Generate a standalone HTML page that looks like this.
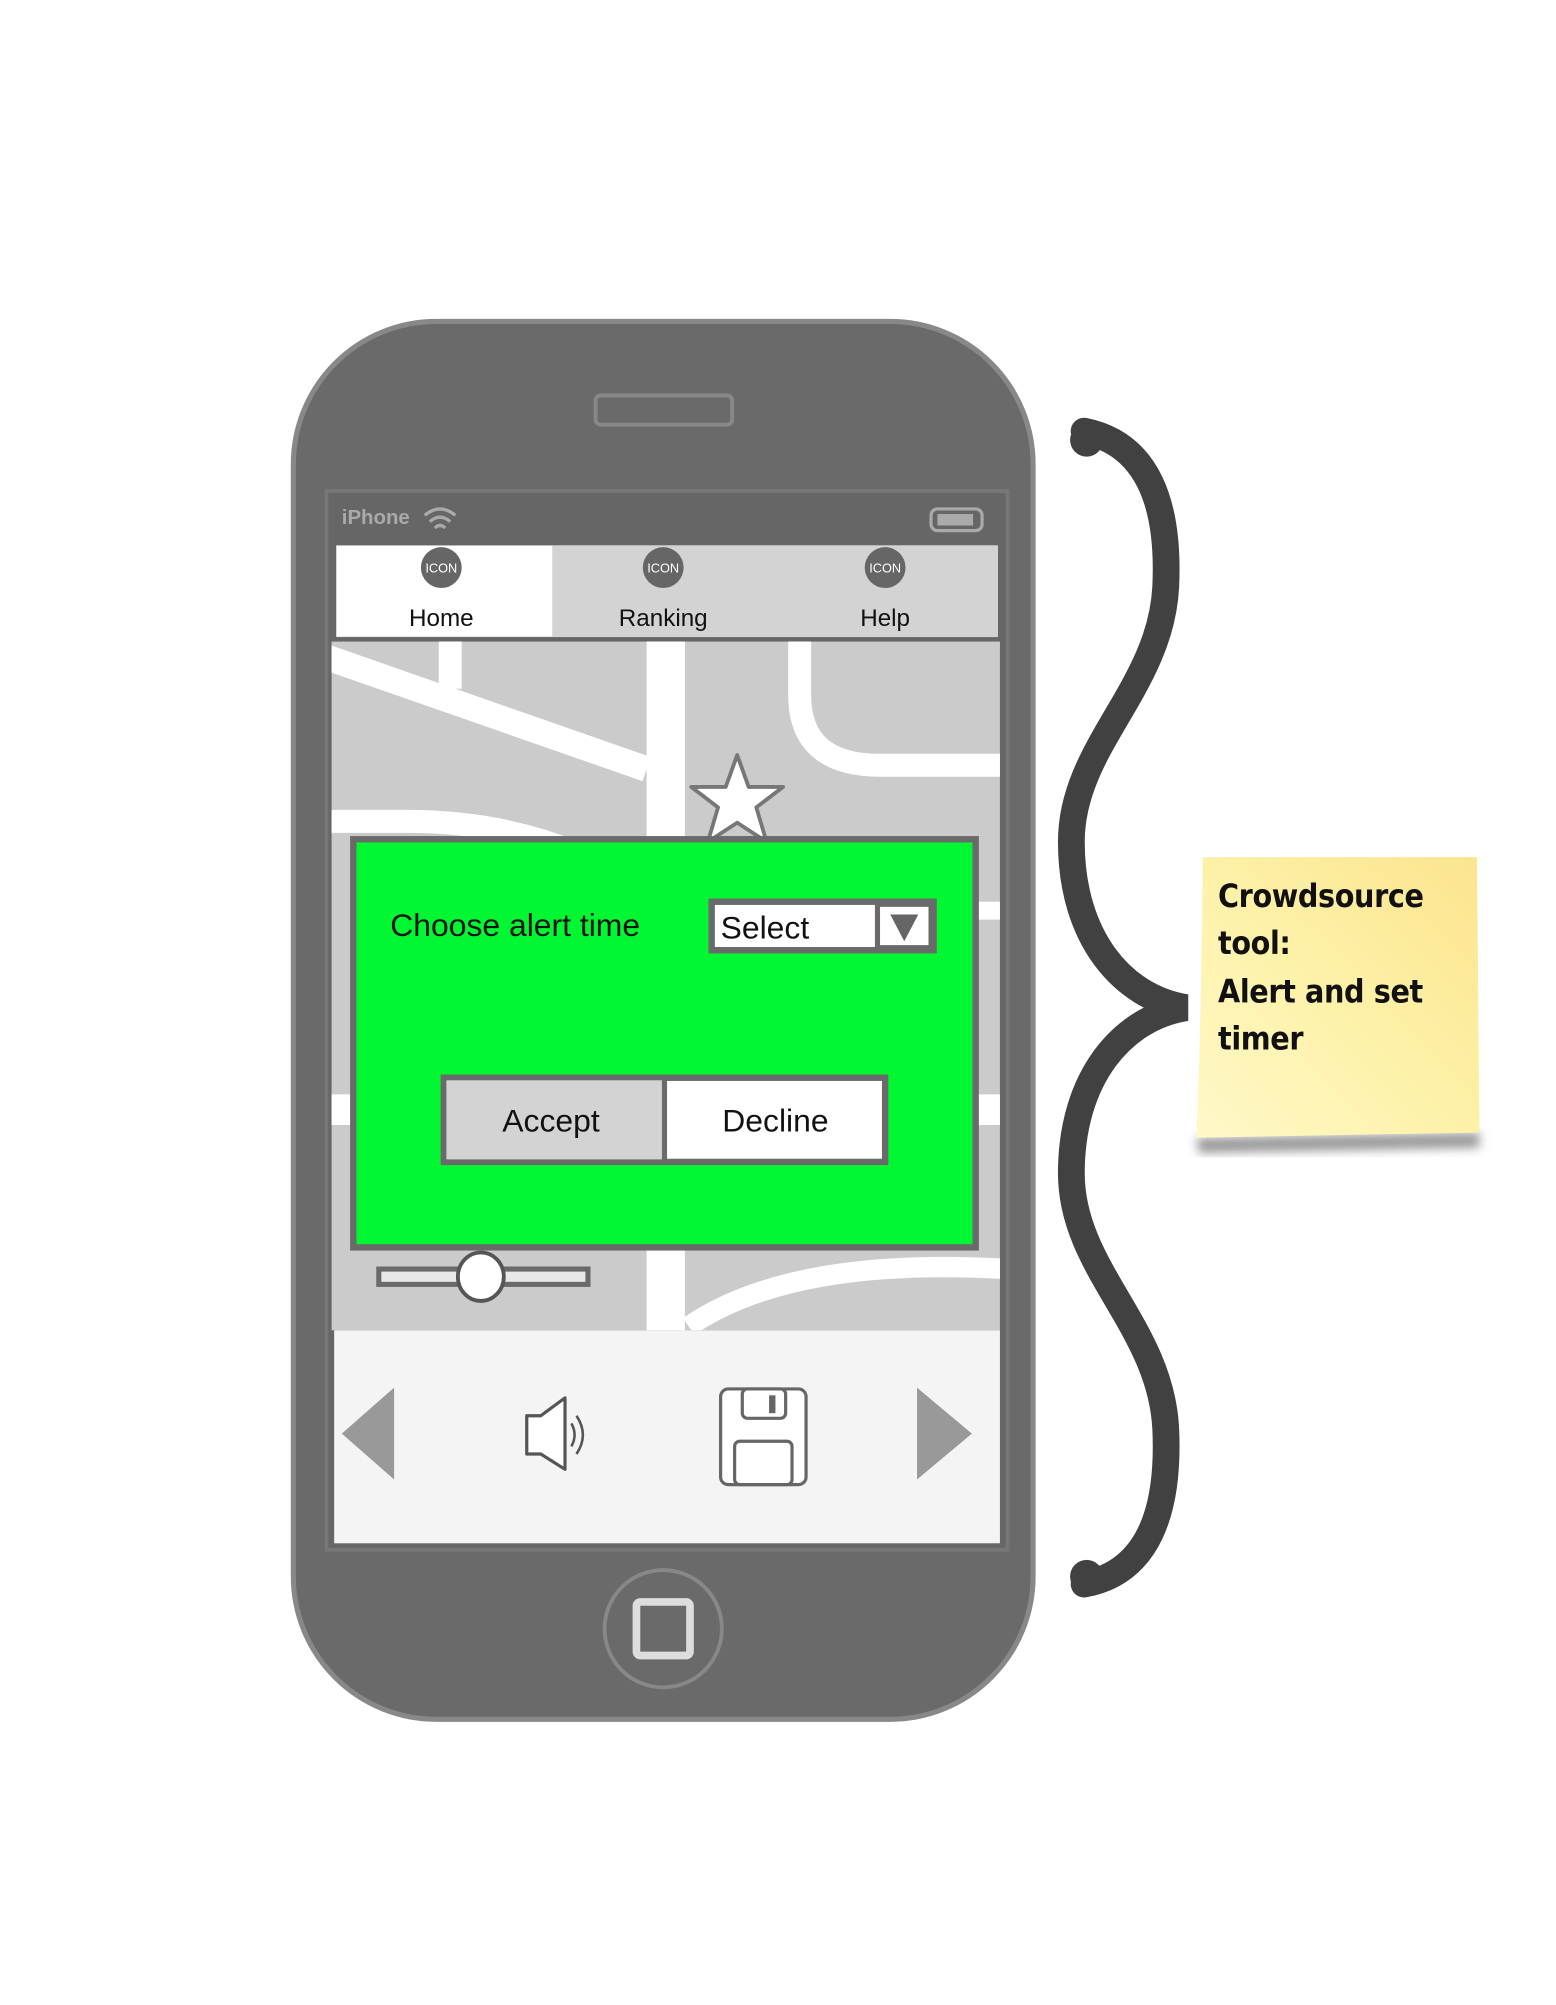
<!DOCTYPE html>
<html><head><meta charset="utf-8"><style>
html,body{margin:0;padding:0;background:#fff;width:1556px;height:2005px;overflow:hidden}
svg{display:block}
</style></head><body>
<svg width="1556" height="2005" viewBox="0 0 1220 1572" xmlns="http://www.w3.org/2000/svg" font-family="'Liberation Sans', Arial, sans-serif">
<defs>
<linearGradient id="note" x1="0" y1="1" x2="1" y2="0">
<stop offset="0" stop-color="#fff8c8"/><stop offset="0.5" stop-color="#fdf1a8"/><stop offset="1" stop-color="#fbe48e"/>
</linearGradient>
<filter id="sh" x="-20%" y="-20%" width="140%" height="140%"><feGaussianBlur stdDeviation="4"/></filter>
<clipPath id="mapclip"><rect x="260" y="503" width="524" height="540"/></clipPath>
</defs>
<rect x="230" y="252" width="580" height="1096" rx="112" fill="#6a6a6a" stroke="#888" stroke-width="4"/>
<rect x="467" y="310" width="107" height="23" rx="4" fill="none" stroke="#888" stroke-width="3"/>
<rect x="256" y="385" width="534" height="830" fill="#666" stroke="#777" stroke-width="3"/>
<text x="268" y="411" font-size="16" font-weight="bold" fill="#aaa">iPhone</text>
<g fill="none" stroke="#aaa" stroke-width="2.5">
<path d="M333 404 Q345 394 357 404"/><path d="M337 409 Q345 402 353 409"/><path d="M341 414 Q345 410 349 414"/>
</g>
<rect x="730" y="399" width="40" height="17" rx="5" fill="none" stroke="#aaa" stroke-width="2.5"/>
<rect x="735" y="403" width="28" height="9" fill="#aaa"/>
<rect x="262" y="426" width="522" height="75" fill="#d3d3d3" stroke="#666" stroke-width="3"/>
<rect x="264" y="428" width="169" height="71" fill="#fff"/>
<g font-size="10" fill="#fff" text-anchor="middle">
<circle cx="346" cy="445" r="16" fill="#666"/><text x="346" y="449">ICON</text>
<circle cx="520" cy="445" r="16" fill="#666"/><text x="520" y="449">ICON</text>
<circle cx="694" cy="445" r="16" fill="#666"/><text x="694" y="449">ICON</text>
</g>
<g font-size="19" fill="#111" text-anchor="middle">
<text x="346" y="491">Home</text><text x="520" y="491">Ranking</text><text x="694" y="491">Help</text>
</g>
<rect x="260" y="503" width="524" height="540" fill="#cbcbcb"/>
<g clip-path="url(#mapclip)" fill="none" stroke="#fff">
<path d="M255 515 L507 603" stroke-width="20"/>
<path d="M353 500 L353 540" stroke-width="18"/>
<path d="M522 500 L522 1050" stroke-width="30"/>
<path d="M627 500 L627 545 Q627 600 690 600 L790 600" stroke-width="18"/>
<path d="M255 644 L320 644 Q390 644 450 668" stroke-width="18"/>
<path d="M760 714 L790 714" stroke-width="14"/>
<path d="M760 870 L790 870" stroke-width="24"/>
<path d="M255 870 L280 870" stroke-width="24"/>
<path d="M540 1040 Q620 985 790 995" stroke-width="16"/>
</g>
<path d="M578 592 L587 617 L614 617 L593 633 L601 660 L578 645 L555 660 L563 633 L542 617 L569 617 Z" fill="#fff" stroke="#777" stroke-width="3" stroke-linejoin="round"/>
<rect x="277" y="658" width="488" height="320" fill="#00f731" stroke="#6a6a6a" stroke-width="5"/>
<text x="306" y="734" font-size="25" fill="#111">Choose alert time</text>
<rect x="558" y="707" width="174" height="38" fill="#fff" stroke="#6a6a6a" stroke-width="5"/>
<rect x="688" y="709" width="42" height="34" fill="#fff" stroke="#6a6a6a" stroke-width="4"/>
<path d="M698 717 L720 717 L709 738 Z" fill="#666"/>
<text x="565" y="736" font-size="25" fill="#111">Select</text>
<rect x="348" y="845" width="346" height="66" fill="#fff" stroke="#6a6a6a" stroke-width="5"/>
<rect x="350" y="847" width="171" height="62" fill="#d3d3d3"/>
<line x1="521" y1="845" x2="521" y2="911" stroke="#6a6a6a" stroke-width="4"/>
<text x="432" y="887" font-size="25" fill="#111" text-anchor="middle">Accept</text>
<text x="608" y="887" font-size="25" fill="#111" text-anchor="middle">Decline</text>
<rect x="297" y="995" width="164" height="12" fill="#e8e8e8" stroke="#6a6a6a" stroke-width="4"/>
<ellipse cx="377" cy="1001" rx="18" ry="19" fill="#fff" stroke="#555" stroke-width="3"/>
<rect x="262" y="1043" width="522" height="167" fill="#f4f4f4"/>
<path d="M309 1088 L309 1160 L268 1124 Z" fill="#999"/>
<path d="M719 1088 L719 1160 L762 1124 Z" fill="#999"/>
<path d="M413 1110 L424 1110 L443 1096 L443 1152 L424 1140 L413 1140 Z" fill="#fff" stroke="#555" stroke-width="2.5" stroke-linejoin="round"/>
<path d="M448 1116 Q453 1125 448 1134" fill="none" stroke="#555" stroke-width="2"/>
<path d="M452 1110 Q462 1125 452 1140" fill="none" stroke="#555" stroke-width="2"/>
<rect x="565" y="1089" width="67" height="75" rx="6" fill="#fff" stroke="#666" stroke-width="2.5"/>
<rect x="582" y="1089" width="34" height="23" rx="4" fill="#fff" stroke="#666" stroke-width="2.5"/>
<rect x="603" y="1094" width="5" height="14" fill="#666"/>
<rect x="576" y="1130" width="45" height="34" rx="4" fill="#fff" stroke="#666" stroke-width="2.5"/>
<circle cx="520" cy="1277" r="46" fill="none" stroke="#888" stroke-width="3"/>
<rect x="499" y="1256" width="42" height="42" rx="3" fill="none" stroke="#ddd" stroke-width="6"/>
<path d="M850 338 C900 348 917 395 914 460 C910 540 840 585 840 660 C840 735 880 782 930 790 C880 798 840 845 840 920 C840 995 910 1040 914 1120 C917 1185 900 1233 850 1242"
 fill="none" stroke="#414141" stroke-width="21" stroke-linecap="round"/>
<circle cx="852" cy="345" r="13" fill="#414141"/>
<circle cx="852" cy="1236" r="13" fill="#414141"/>
<path d="M938 892 L1160 888 L1160 900 L940 904 Z" fill="#999" filter="url(#sh)"/>
<path d="M943 672 L1158 672 L1160 888 L938 892 Q942 800 943 672 Z" fill="url(#note)"/>
<g font-family="'DejaVu Sans Condensed','DejaVu Sans',sans-serif" font-weight="bold" font-size="25" fill="#111" letter-spacing="-0.3">
<text x="955" y="711">Crowdsource</text>
<text x="955" y="748">tool:</text>
<text x="955" y="786">Alert and set</text>
<text x="955" y="823">timer</text>
</g>
</svg>
</body></html>
